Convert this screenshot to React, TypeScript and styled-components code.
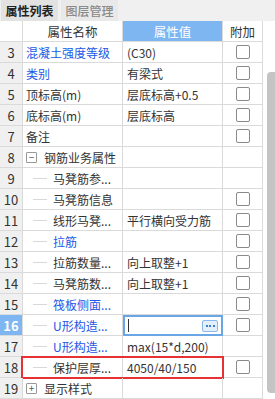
import React from "react";
import styled, { createGlobalStyle } from "styled-components";

const Global = createGlobalStyle`
  html, body { margin: 0; padding: 0; background: #ffffff; }
  body { font-family: "Noto Sans CJK SC", "Noto Sans", sans-serif; }
  * { box-sizing: border-box; }
`;

const Page = styled.div`
  width: 275px;
  height: 399px;
  overflow: hidden;
  display: flex;
  flex-direction: column;
  background: #fff;
`;

const TabBar = styled.div`
  height: 22px;
  display: flex;
  align-items: stretch;
  background: #f0f0f0;
  gap: 3px;
  padding-left: 1px;
`;

const Tab = styled.div<{ $active?: boolean }>`
  width: 57px;
  display: flex;
  align-items: center;
  justify-content: center;
  font-size: 12px;
  font-weight: ${(p) => (p.$active ? 600 : 500)};
  color: ${(p) => (p.$active ? "#222" : "#8a8a8a")};
  background: ${(p) => (p.$active ? "#e2e2e2" : "#e9e9e9")};
`;

const Body = styled.div`
  flex: 1;
  display: flex;
`;

const Table = styled.div`
  width: 263px;
  display: flex;
  flex-direction: column;
`;

const Row = styled.div`
  position: relative;
  display: grid;
  grid-template-columns: 23px 100px 100px 40px;
  height: 21px;
`;

const Cell = styled.div`
  border-right: 1px solid #dadada;
  border-bottom: 1px solid #dadada;
  display: flex;
  align-items: center;
  font-size: 12px;
  color: #333;
  white-space: nowrap;
  overflow: hidden;
`;

const NumCell = styled(Cell)<{ $active?: boolean }>`
  justify-content: center;
  font-size: 13px;
  background: ${(p) => (p.$active ? "#7db6f1" : "#f0f0f0")};
  color: ${(p) => (p.$active ? "#fff" : "#333")};
  font-weight: ${(p) => (p.$active ? 700 : 400)};
`;

const HeadCell = styled(Cell)<{ $blue?: boolean }>`
  justify-content: center;
  font-size: 12.5px;
  background: ${(p) => (p.$blue ? "#7db6f1" : "#fff")};
  color: ${(p) => (p.$blue ? "#fff" : "#333")};
`;

const NameCell = styled(Cell)<{ $indent: number; $blue?: boolean }>`
  padding-left: ${(p) => p.$indent}px;
  color: ${(p) => (p.$blue ? "#2158e6" : "#333")};
`;

const ValueCell = styled(Cell)`
  padding-left: 4px;
`;

const EditCell = styled(Cell)`
  border: 2px solid #6aa6e6;
  padding-left: 3px;
  justify-content: space-between;
  padding-right: 3px;
`;

const Caret = styled.span`
  width: 1px;
  height: 13px;
  background: #333;
`;

const DotsButton = styled.div`
  width: 16px;
  height: 12px;
  border: 1px solid #8ab8ea;
  border-radius: 2px;
  background: #e4effc;
  display: flex;
  align-items: center;
  justify-content: center;
  gap: 1.5px;
`;

const Dot = styled.span`
  width: 2px;
  height: 2px;
  background: #3a7fd6;
`;

const CheckCell = styled(Cell)`
  justify-content: center;
`;

const Check = styled.span`
  width: 14px;
  height: 14px;
  border: 1px solid #8a8a8a;
  border-radius: 2px;
  background: #fff;
`;

const ToggleBox = styled.span`
  width: 11px;
  height: 11px;
  border: 1px solid #999;
  border-radius: 1px;
  margin-right: 7px;
  display: flex;
  align-items: center;
  justify-content: center;
  font-size: 10px;
  line-height: 1;
  color: #555;
  flex-shrink: 0;
`;

const Connector = styled.span`
  width: 14px;
  height: 1px;
  background: #d8d8d8;
  margin-right: 6px;
  flex-shrink: 0;
`;

const Highlight = styled.div`
  position: absolute;
  left: 21px;
  top: -1px;
  width: 203px;
  height: 23px;
  border: 2px solid #e63232;
  pointer-events: none;
`;

const ScrollTrack = styled.div`
  width: 12px;
  position: relative;
  background: #fff;
`;

const Thumb = styled.div`
  position: absolute;
  left: 4px;
  right: 0;
  top: 51px;
  bottom: 6px;
  background: #c4c4c4;
  border-radius: 4px 0 0 4px;
`;

type RowData = {
  n: number;
  name: string;
  value?: string;
  level: 0 | 1;
  blue?: boolean;
  check?: boolean;
  toggle?: "-" | "+";
  edit?: boolean;
  mark?: boolean;
};

const rows: RowData[] = [
  { n: 3, name: "混凝土强度等级", value: "(C30)", level: 0, blue: true, check: true },
  { n: 4, name: "类别", value: "有梁式", level: 0, blue: true, check: true },
  { n: 5, name: "顶标高(m)", value: "层底标高+0.5", level: 0, check: true },
  { n: 6, name: "底标高(m)", value: "层底标高", level: 0, check: true },
  { n: 7, name: "备注", level: 0, check: true },
  { n: 8, name: "钢筋业务属性", level: 0, toggle: "-" },
  { n: 9, name: "马凳筋参...", level: 1 },
  { n: 10, name: "马凳筋信息", level: 1, check: true },
  { n: 11, name: "线形马凳...", value: "平行横向受力筋", level: 1, check: true },
  { n: 12, name: "拉筋", level: 1, blue: true, check: true },
  { n: 13, name: "拉筋数量...", value: "向上取整+1", level: 1, check: true },
  { n: 14, name: "马凳筋数...", value: "向上取整+1", level: 1, check: true },
  { n: 15, name: "筏板侧面...", level: 1, blue: true, check: true },
  { n: 16, name: "U形构造...", level: 1, blue: true, check: true, edit: true },
  { n: 17, name: "U形构造...", value: "max(15*d,200)", level: 1, blue: true },
  { n: 18, name: "保护层厚...", value: "4050/40/150", level: 1, check: true, mark: true },
  { n: 19, name: "显示样式", level: 0, toggle: "+" },
];

export default function App() {
  return (
    <Page>
      <Global />
      <TabBar>
        <Tab $active>属性列表</Tab>
        <Tab>图层管理</Tab>
      </TabBar>
      <Body>
        <Table>
          <Row>
            <HeadCell />
            <HeadCell>属性名称</HeadCell>
            <HeadCell $blue>属性值</HeadCell>
            <HeadCell>附加</HeadCell>
          </Row>
          {rows.map((r) => (
            <Row key={r.n}>
              <NumCell $active={r.edit}>{r.n}</NumCell>
              <NameCell $indent={r.level === 1 ? 10 : 3} $blue={r.blue}>
                {r.toggle && <ToggleBox>{r.toggle === "-" ? "−" : "+"}</ToggleBox>}
                {r.level === 1 && <Connector />}
                {r.name}
              </NameCell>
              {r.edit ? (
                <EditCell>
                  <Caret />
                  <DotsButton>
                    <Dot />
                    <Dot />
                    <Dot />
                  </DotsButton>
                </EditCell>
              ) : (
                <ValueCell>{r.value}</ValueCell>
              )}
              <CheckCell>{r.check && <Check />}</CheckCell>
              {r.mark && <Highlight />}
            </Row>
          ))}
        </Table>
        <ScrollTrack>
          <Thumb />
        </ScrollTrack>
      </Body>
    </Page>
  );
}
